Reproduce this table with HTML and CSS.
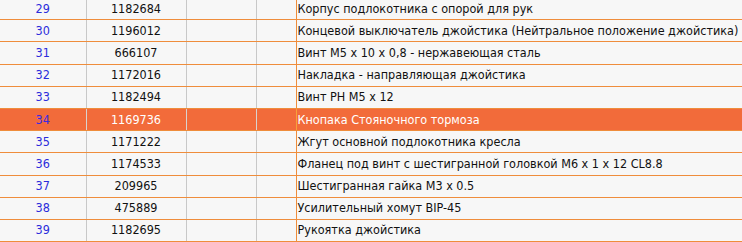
FILE: index.html
```html
<!DOCTYPE html>
<html>
<head>
<meta charset="utf-8">
<link rel="stylesheet" href="styles.css">
</head>
<body>
<table class="parts">
<colgroup><col class="c-pos"><col class="c-code"><col class="c-qty"><col class="c-x"><col class="c-name"></colgroup>
<tbody>
<tr><td class="pos">29</td><td class="code">1182684</td><td></td><td class="sep"></td><td class="name">Корпус подлокотника с опорой для рук</td></tr>
<tr><td class="pos">30</td><td class="code">1196012</td><td></td><td class="sep"></td><td class="name">Концевой выключатель джойстика (Нейтральное положение джойстика)</td></tr>
<tr><td class="pos">31</td><td class="code">666107</td><td></td><td class="sep"></td><td class="name">Винт М5 x 10 x 0,8 - нержавеющая сталь</td></tr>
<tr><td class="pos">32</td><td class="code">1172016</td><td></td><td class="sep"></td><td class="name">Накладка - направляющая джойстика</td></tr>
<tr><td class="pos">33</td><td class="code">1182494</td><td></td><td class="sep"></td><td class="name">Винт PH M5 x 12</td></tr>
<tr class="active"><td class="pos">34</td><td class="code">1169736</td><td></td><td class="sep"></td><td class="name">Кнопака Стояночного тормоза</td></tr>
<tr><td class="pos">35</td><td class="code">1171222</td><td></td><td class="sep"></td><td class="name">Жгут основной подлокотника кресла</td></tr>
<tr><td class="pos">36</td><td class="code">1174533</td><td></td><td class="sep"></td><td class="name">Фланец под винт с шестигранной головкой M6 x 1 x 12 CL8.8</td></tr>
<tr><td class="pos">37</td><td class="code">209965</td><td></td><td class="sep"></td><td class="name">Шестигранная гайка M3 x 0.5</td></tr>
<tr><td class="pos">38</td><td class="code">475889</td><td></td><td class="sep"></td><td class="name">Усилительный хомут BIP-45</td></tr>
<tr><td class="pos">39</td><td class="code">1182695</td><td></td><td class="sep"></td><td class="name">Рукоятка джойстика</td></tr>
</tbody>
</table>
</body>
</html>
```
FILE: styles.css
```css
html, body {
  margin: 0;
  padding: 0;
  background: #f7f7f7;
  overflow: hidden;
}
.parts {
  border-collapse: collapse;
  table-layout: fixed;
  width: 742px;
  margin-top: -2px;
  font-family: "DejaVu Sans Condensed", "DejaVu Sans", sans-serif;
  font-stretch: condensed;
  font-size: 12.5px;
  color: #111;
  background: #f7f7f7;
}
.c-pos { width: 86px; }
.c-code { width: 100px; }
.c-qty { width: 70px; }
.c-x { width: 40px; }
.c-name { width: 446px; }
.parts td {
  height: 21.2px;
  padding: 0;
  border-bottom: 1px solid #ef8d3c;
  border-right: 1px solid #c8c8c8;
  text-align: center;
  white-space: nowrap;
  overflow: hidden;
  line-height: 14px;
}
.parts td.sep { border-right-color: #ef8d3c; }
.parts td.name {
  text-align: left;
  padding-left: 1px;
  border-right: none;
}
.parts td.pos { color: #2b2bdb; }
.parts tr.active td {
  background: #f26b3a;
  color: #fff;
}
.parts tr.active td.pos { color: #3a2ae0; }
.parts tr.active td { border-right-color: #d9d3cf; }
.parts tr.active td.sep { border-right-color: #f7a13a; }
```
